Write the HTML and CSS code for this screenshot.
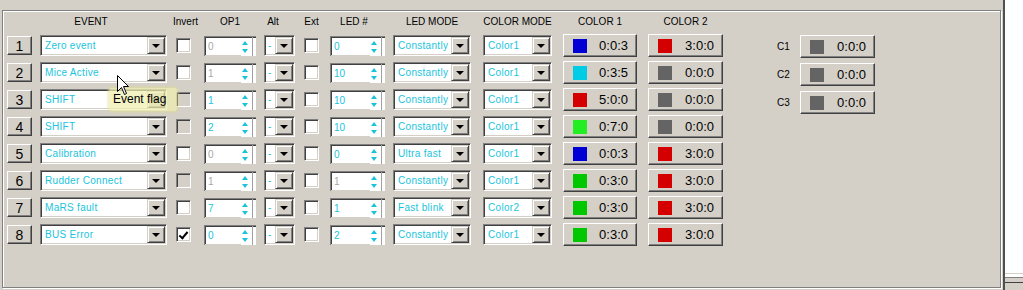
FILE: index.html
```html
<!DOCTYPE html>
<html lang="en">
<head>
    <meta charset="UTF-8">
    <title>LED events</title>
    <link rel="stylesheet" href="styles.css">
</head>
<body>
<div class="app">
    <!-- 이벤트 그룹박스 -->
    <div class="group">
        <div class="grid">
            <!-- 헤더 -->
            <div class="hd num"></div>
            <div class="hd ev">EVENT</div>
            <div class="hd inv">Invert</div>
            <div class="hd op">OP1</div>
            <div class="hd alt">Alt</div>
            <div class="hd ext">Ext</div>
            <div class="hd led">LED #</div>
            <div class="hd mode">LED MODE</div>
            <div class="hd cm">COLOR MODE</div>
            <div class="hd c1">COLOR 1</div>
            <div class="hd c2">COLOR 2</div>

            <!-- 1 -->
            <div class="btn num">1</div>
            <div class="combo ev"><span class="txt">Zero event</span><span class="dd"></span></div>
            <span class="cb inv"></span>
            <div class="spin op off"><span class="val">0</span><span class="arw"></span></div>
            <div class="combo alt"><span class="txt">-</span><span class="dd"></span></div>
            <span class="cb ext"></span>
            <div class="spin led"><span class="val">0</span><span class="arw"></span></div>
            <div class="combo mode"><span class="txt">Constantly</span><span class="dd"></span></div>
            <div class="combo cm"><span class="txt">Color1</span><span class="dd"></span></div>
            <div class="btn clr c1"><i class="sw blue"></i>0:0:3</div>
            <div class="btn clr c2"><i class="sw red"></i>3:0:0</div>

            <!-- 2 -->
            <div class="btn num">2</div>
            <div class="combo ev"><span class="txt">Mice Active</span><span class="dd"></span></div>
            <span class="cb inv"></span>
            <div class="spin op off"><span class="val">1</span><span class="arw"></span></div>
            <div class="combo alt"><span class="txt">-</span><span class="dd"></span></div>
            <span class="cb ext"></span>
            <div class="spin led"><span class="val">10</span><span class="arw"></span></div>
            <div class="combo mode"><span class="txt">Constantly</span><span class="dd"></span></div>
            <div class="combo cm"><span class="txt">Color1</span><span class="dd"></span></div>
            <div class="btn clr c1"><i class="sw cyan"></i>0:3:5</div>
            <div class="btn clr c2"><i class="sw gray"></i>0:0:0</div>

            <!-- 3 -->
            <div class="btn num">3</div>
            <div class="combo ev"><span class="txt">SHIFT</span><span class="dd"></span></div>
            <span class="cb inv dis"></span>
            <div class="spin op"><span class="val">1</span><span class="arw"></span></div>
            <div class="combo alt"><span class="txt">-</span><span class="dd"></span></div>
            <span class="cb ext"></span>
            <div class="spin led"><span class="val">10</span><span class="arw"></span></div>
            <div class="combo mode"><span class="txt">Constantly</span><span class="dd"></span></div>
            <div class="combo cm"><span class="txt">Color1</span><span class="dd"></span></div>
            <div class="btn clr c1"><i class="sw red"></i>5:0:0</div>
            <div class="btn clr c2"><i class="sw gray"></i>0:0:0</div>

            <!-- 4 -->
            <div class="btn num">4</div>
            <div class="combo ev"><span class="txt">SHIFT</span><span class="dd"></span></div>
            <span class="cb inv dis"></span>
            <div class="spin op"><span class="val">2</span><span class="arw"></span></div>
            <div class="combo alt"><span class="txt">-</span><span class="dd"></span></div>
            <span class="cb ext"></span>
            <div class="spin led"><span class="val">10</span><span class="arw"></span></div>
            <div class="combo mode"><span class="txt">Constantly</span><span class="dd"></span></div>
            <div class="combo cm"><span class="txt">Color1</span><span class="dd"></span></div>
            <div class="btn clr c1"><i class="sw lime"></i>0:7:0</div>
            <div class="btn clr c2"><i class="sw gray"></i>0:0:0</div>

            <!-- 5 -->
            <div class="btn num">5</div>
            <div class="combo ev"><span class="txt">Calibration</span><span class="dd"></span></div>
            <span class="cb inv"></span>
            <div class="spin op off"><span class="val">0</span><span class="arw"></span></div>
            <div class="combo alt"><span class="txt">-</span><span class="dd"></span></div>
            <span class="cb ext"></span>
            <div class="spin led"><span class="val">0</span><span class="arw"></span></div>
            <div class="combo mode"><span class="txt">Ultra fast</span><span class="dd"></span></div>
            <div class="combo cm"><span class="txt">Color1</span><span class="dd"></span></div>
            <div class="btn clr c1"><i class="sw blue"></i>0:0:3</div>
            <div class="btn clr c2"><i class="sw red"></i>3:0:0</div>

            <!-- 6 -->
            <div class="btn num">6</div>
            <div class="combo ev"><span class="txt">Rudder Connect</span><span class="dd"></span></div>
            <span class="cb inv dis"></span>
            <div class="spin op off"><span class="val">1</span><span class="arw"></span></div>
            <div class="combo alt"><span class="txt">-</span><span class="dd"></span></div>
            <span class="cb ext"></span>
            <div class="spin led off"><span class="val">1</span><span class="arw"></span></div>
            <div class="combo mode"><span class="txt">Constantly</span><span class="dd"></span></div>
            <div class="combo cm"><span class="txt">Color1</span><span class="dd"></span></div>
            <div class="btn clr c1"><i class="sw green"></i>0:3:0</div>
            <div class="btn clr c2"><i class="sw red"></i>3:0:0</div>

            <!-- 7 -->
            <div class="btn num">7</div>
            <div class="combo ev"><span class="txt">MaRS fault</span><span class="dd"></span></div>
            <span class="cb inv"></span>
            <div class="spin op"><span class="val">7</span><span class="arw"></span></div>
            <div class="combo alt"><span class="txt">-</span><span class="dd"></span></div>
            <span class="cb ext"></span>
            <div class="spin led"><span class="val">1</span><span class="arw"></span></div>
            <div class="combo mode"><span class="txt">Fast blink</span><span class="dd"></span></div>
            <div class="combo cm"><span class="txt">Color2</span><span class="dd"></span></div>
            <div class="btn clr c1"><i class="sw green"></i>0:3:0</div>
            <div class="btn clr c2"><i class="sw red"></i>3:0:0</div>

            <!-- 8 -->
            <div class="btn num">8</div>
            <div class="combo ev"><span class="txt">BUS Error</span><span class="dd"></span></div>
            <span class="cb inv on"></span>
            <div class="spin op"><span class="val">0</span><span class="arw"></span></div>
            <div class="combo alt"><span class="txt">-</span><span class="dd"></span></div>
            <span class="cb ext"></span>
            <div class="spin led"><span class="val">2</span><span class="arw"></span></div>
            <div class="combo mode"><span class="txt">Constantly</span><span class="dd"></span></div>
            <div class="combo cm"><span class="txt">Color1</span><span class="dd"></span></div>
            <div class="btn clr c1"><i class="sw green"></i>0:3:0</div>
            <div class="btn clr c2"><i class="sw red"></i>3:0:0</div>
        </div>

        <!-- 공용 색상 C1~C3 -->
        <div class="side">
            <div class="side-row"><span class="lbl">C1</span><div class="btn clr"><i class="sw gray"></i>0:0:0</div></div>
            <div class="side-row"><span class="lbl">C2</span><div class="btn clr"><i class="sw gray"></i>0:0:0</div></div>
            <div class="side-row"><span class="lbl">C3</span><div class="btn clr"><i class="sw gray"></i>0:0:0</div></div>
        </div>
    </div>

    <!-- 오른쪽 패널 -->
    <div class="pane">
        <div class="pane-list"></div>
        <div class="pane-foot"></div>
    </div>

    <!-- 툴팁 + 마우스 -->
    <div class="tip">Event flag</div>
    <svg class="cursor" width="13" height="21" viewBox="0 0 13 21">
        <path d="M0.5 0.5 L0.5 16.5 L4.5 12.5 L7.5 19.5 L9.5 18.5 L6.5 11.5 L11.5 11.5 Z" fill="#fff" stroke="#000" stroke-width="1"/>
    </svg>
</div>
</body>
</html>
```

FILE: styles.css
```css
*{
    box-sizing: border-box;
}
body{
    margin: 0;
    background-color: #d4d0c8;
    font-family: "Liberation Sans", Arial, sans-serif;
    color: #000;
}
.app{
    position: relative;
    display: flex;
    width: 1023px;
    height: 290px;
    overflow: hidden;
}

/* 그룹박스 (에칭 테두리) */
.group{
    display: flex;
    align-items: flex-start;
    width: 999px;
    height: 278px;
    margin: 10px 0 0 2px;
    padding: 5px 0 0 4px;
    border: 1px solid #808080;
    box-shadow: inset 1px 1px 0 #fff, 1px 1px 0 #fff;
}

/* 표 */
.grid{
    display: grid;
    grid-template-columns: 25px 135px 24px 65px 39px 24px 66px 86px 81px 85px 86px;
    grid-template-rows: 16px repeat(8, 27px);
    align-items: center;
}
.grid > *{
    justify-self: end;
}

/* 컬럼 폭 */
.num{ width: 25px; }
.ev{ width: 127px; }
.inv, .ext{ width: 15px; }
.op{ width: 52px; }
.alt{ width: 31px; }
.led{ width: 55px; }
.mode{ width: 78px; }
.cm{ width: 69px; }
.c1{ width: 74px; }
.c2{ width: 75px; }

/* 헤더 */
.hd{
    align-self: start;
    display: flex;
    justify-content: center;
    height: 12px;
    font-size: 10px;
    line-height: 12px;
    white-space: nowrap;
}
.hd.ev{ padding-right: 25px; }
.hd.inv{ padding-left: 4px; }
.hd.alt{ padding-right: 13px; }
.hd.led{ padding-right: 7px; }

/* 볼록 버튼 */
.btn{
    display: flex;
    align-items: center;
    justify-content: center;
    background-color: #d4d0c8;
    border: 1px solid;
    border-color: #fff #404040 #404040 #fff;
    box-shadow: inset -1px -1px 0 #808080;
}
.btn.num{
    height: 19px;
    font-size: 14px;
}
.btn.clr{
    justify-content: flex-start;
    height: 23px;
    padding: 0 8px 0 9px;
    font-size: 13px;
}
.sw{
    width: 14px;
    height: 14px;
    margin-right: auto;
}
.blue{ background-color: #0000d4; }
.red{ background-color: #d40000; }
.cyan{ background-color: #00cce6; }
.gray{ background-color: #646464; }
.lime{ background-color: #22ee22; }
.green{ background-color: #00c800; }

/* 콤보박스 */
.combo{
    display: flex;
    align-items: center;
    height: 21px;
    background-color: #fff;
    border: 1px solid;
    border-color: #808080 #fff #fff #808080;
    box-shadow: inset 1px 1px 0 #404040, inset -1px -1px 0 #d4d0c8;
    padding: 1px;
}
.txt{
    flex: 1;
    padding-left: 3px;
    overflow: hidden;
    white-space: nowrap;
    color: #18c4dc;
    font-size: 10px;
    letter-spacing: 0.3px;
}
.dd{
    display: flex;
    align-items: center;
    justify-content: center;
    width: 18px;
    height: 17px;
    background-color: #d4d0c8;
    border: 1px solid;
    border-color: #d4d0c8 #404040 #404040 #d4d0c8;
    box-shadow: inset 1px 1px 0 #fff, inset -1px -1px 0 #808080;
}
.dd::after{
    content: "";
    border-left: 4px solid transparent;
    border-right: 4px solid transparent;
    border-top: 4px solid #000;
    margin-top: 1px;
}
.alt .txt{
    padding-left: 2px;
}

/* 체크박스 */
.cb{
    height: 15px;
    background-color: #fff;
    border: 1px solid;
    border-color: #808080 #fff #fff #808080;
    box-shadow: inset 1px 1px 0 #404040, inset -1px -1px 0 #d4d0c8;
    position: relative;
}
.cb.dis{
    background-color: #d4d0c8;
}
.cb.on::after{
    content: "";
    position: absolute;
    left: 4px;
    top: 2px;
    width: 3px;
    height: 7px;
    border: solid #000;
    border-width: 0 2px 2px 0;
    transform: rotate(40deg);
}

/* 스핀 에디트 */
.spin{
    display: flex;
    align-items: stretch;
    height: 20px;
    background-color: #fff;
    border-top: 1px solid #808080;
    border-left: 1px solid #808080;
    box-shadow: inset 1px 1px 0 #404040;
}
.spin::after{
    content: "";
    width: 1px;
    margin: 0 3px 0 2px;
    background-color: #a0a0a0;
}
.val{
    flex: 1;
    display: flex;
    align-items: center;
    padding: 1px 0 0 3px;
    border-bottom: 1px solid #d4d0c8;
    color: #18c4dc;
    font-size: 10px;
}
.spin.off .val{
    color: #a8a8a8;
}
.arw{
    position: relative;
    width: 9px;
}
.arw::before, .arw::after{
    content: "";
    position: absolute;
    left: 1px;
    border-left: 3.5px solid transparent;
    border-right: 3.5px solid transparent;
}
.arw::before{
    top: 4px;
    border-bottom: 4px solid #18c4dc;
}
.arw::after{
    bottom: 3px;
    border-top: 4px solid #18c4dc;
}

/* C1~C3 */
.side{
    display: flex;
    flex-direction: column;
    gap: 5px;
    margin: 19px 0 0 54px;
}
.side-row{
    display: flex;
    align-items: center;
}
.lbl{
    width: 23px;
    font-size: 10px;
}
.side .btn.clr{
    width: 75px;
}

/* 오른쪽 패널 */
.pane{
    display: flex;
    flex-direction: column;
    flex: 1;
    margin-left: 2px;
    border-left: 2px solid #505050;
}
.pane-list{
    flex: 1;
    background-color: #fff;
}
.pane-foot{
    height: 17px;
    border-top: 1px solid #d4d0c8;
    box-shadow: inset 0 3px 0 #fff, inset 0 4px 0 #808080, inset 0 -7px 0 #d4d0c8, inset 0 -8px 0 #404040;
}

/* 툴팁 */
.tip{
    position: absolute;
    top: 88px;
    left: 109px;
    width: 68px;
    height: 23px;
    padding: 4px 0 0 4px;
    font-size: 12px;
    background-color: rgba(240, 238, 175, 0.72);
    border-radius: 3px;
    box-shadow: 0 0 3px 1px rgba(225, 222, 140, 0.7);
}
.cursor{
    position: absolute;
    top: 75px;
    left: 117px;
}
```
